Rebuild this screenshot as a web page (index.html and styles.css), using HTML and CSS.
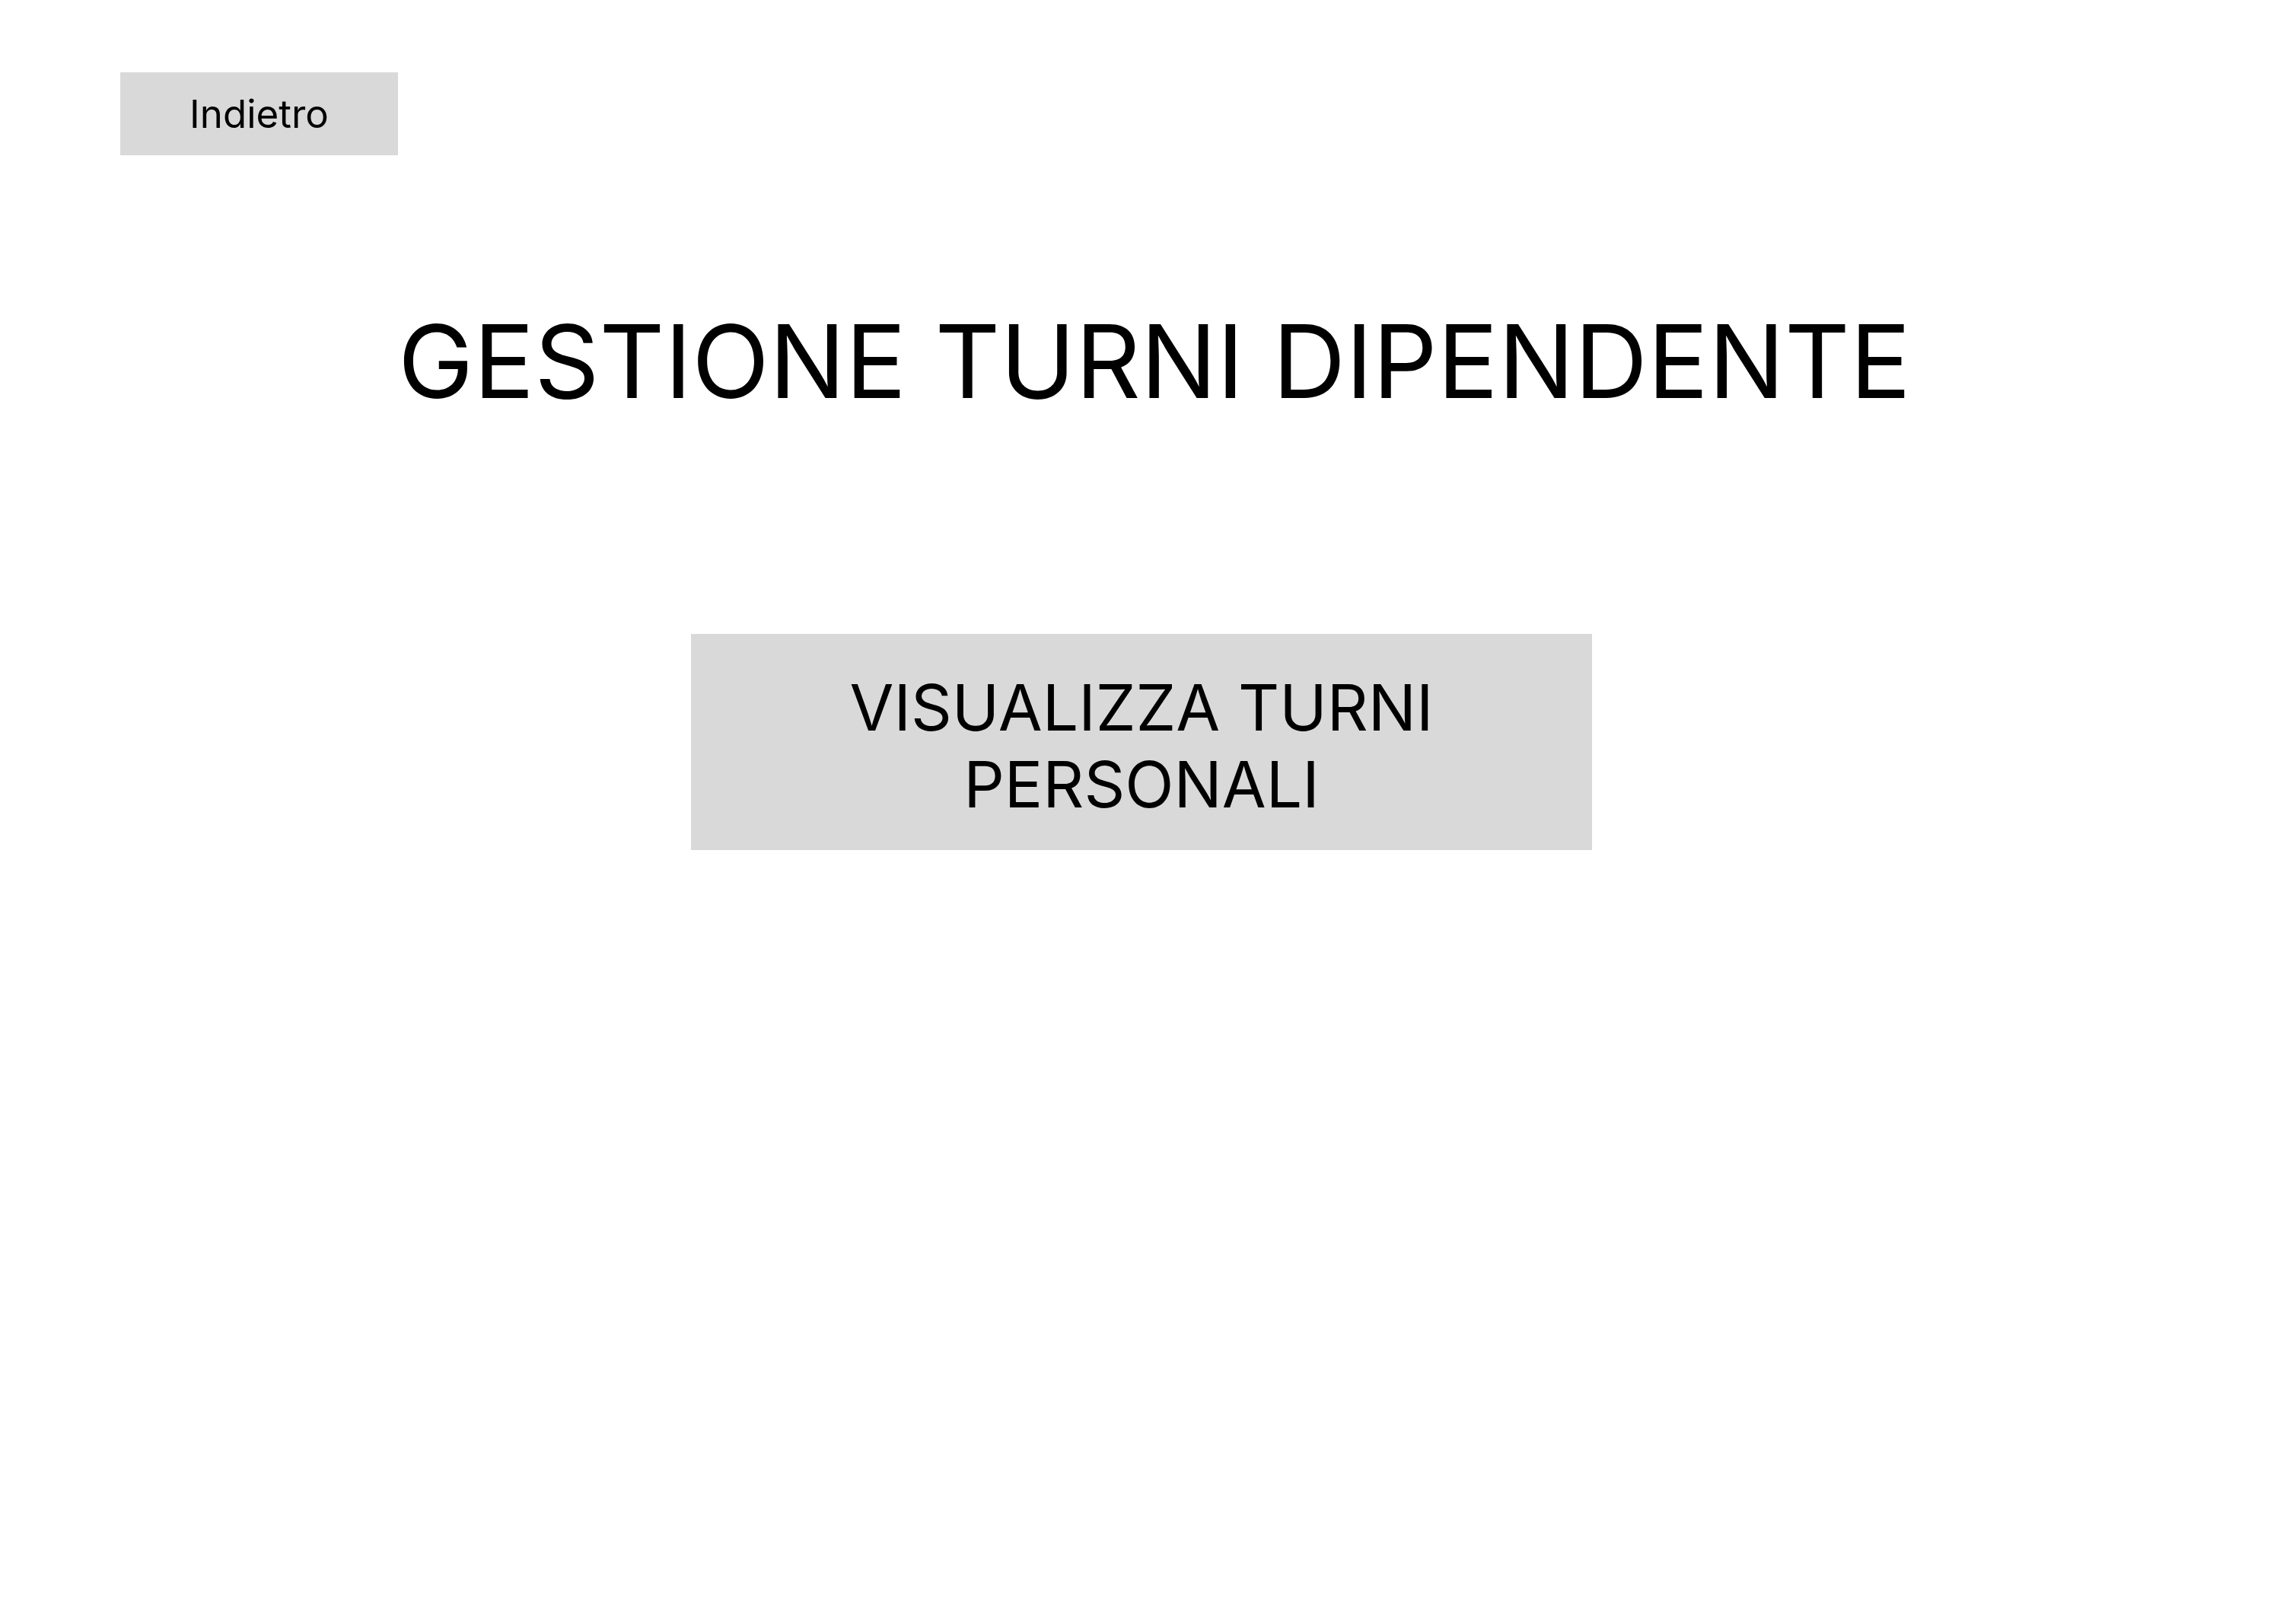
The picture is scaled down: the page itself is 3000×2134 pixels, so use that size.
FILE: index.html
```html
<!DOCTYPE html>
<html lang="it">
<head>
<meta charset="utf-8">
<title>Gestione turni dipendente</title>
<link rel="stylesheet" href="styles.css">
</head>
<body>
<div class="page">
  <div class="topbar">
    <button class="back-btn">Indietro</button>
  </div>
  <h1 class="title">GESTIONE TURNI DIPENDENTE</h1>
  <div class="actions">
    <button class="action-btn">VISUALIZZA TURNI PERSONALI</button>
  </div>
</div>
</body>
</html>
```

FILE: styles.css
```css
html, body {
  margin: 0;
  padding: 0;
  background: #ffffff;
}

body {
  font-family: Inter, "Noto Sans", "Liberation Sans", sans-serif;
  color: #000000;
}

.page {
  width: 3000px;
  min-height: 2134px;
  display: flex;
  flex-direction: column;
}

.topbar {
  display: flex;
  padding: 95px 0 0 158px;
}

.back-btn {
  width: 365px;
  height: 109px;
  background: #d9d9d9;
  border: none;
  margin: 0;
  padding: 0;
  font-family: inherit;
  font-size: 51px;
  color: #000;
  display: flex;
  align-items: center;
  justify-content: center;
}

.title {
  margin: 190px 0 0 0;
  padding-left: 34px;
  font-size: 133px;
  font-weight: 400;
  line-height: normal;
  text-align: center;
}

.actions {
  display: flex;
  justify-content: center;
  margin-top: 278px;
}

.action-btn {
  width: 1184px;
  height: 284px;
  background: #d9d9d9;
  border: none;
  margin: 0;
  padding: 10px 40px 0 40px;
  font-family: inherit;
  font-size: 84px;
  line-height: normal;
  color: #000;
  text-align: center;
}
```
